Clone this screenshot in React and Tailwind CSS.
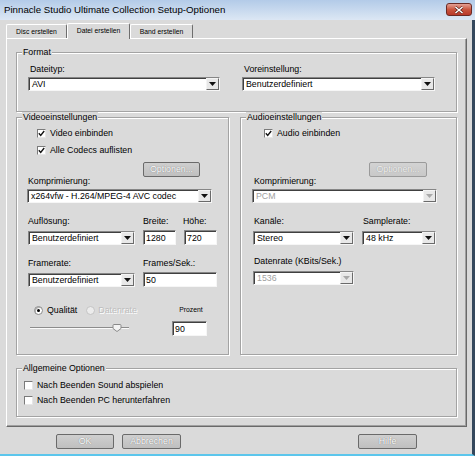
import React from 'react';

function Arrow({ disabled }) {
  return (
    <span className="flex h-full w-[13px] shrink-0 items-center justify-center border-t border-l border-r border-b border-t-[#f4f4f4] border-l-[#f4f4f4] border-r-[#6a6a6a] border-b-[#6a6a6a] bg-[#e8e8e8]">
      <svg width="7" height="4" viewBox="0 0 7 4">
        <path d="M0 0 H7 L3.5 4 Z" fill={disabled ? '#a9a9a9' : '#111'} />
      </svg>
    </span>
  );
}

function Combo({ value, disabled, className = '' }) {
  return (
    <div
      className={`flex h-[14px] bg-white border-t border-l border-r border-b border-t-[#868686] border-l-[#868686] border-r-[#f6f6f6] border-b-[#f6f6f6] shadow-[inset_1px_1px_0_#404040] ${className}`}
    >
      <span className={`flex-1 truncate pl-[3px] pt-[1px] leading-[11px] ${disabled ? 'text-[#a0a0a0]' : ''}`}>{value}</span>
      <Arrow disabled={disabled} />
    </div>
  );
}

function Field({ value, className = '' }) {
  return (
    <div
      className={`h-[15px] bg-white border-t border-l border-r border-b border-t-[#868686] border-l-[#868686] border-r-[#f6f6f6] border-b-[#f6f6f6] shadow-[inset_1px_1px_0_#404040] pl-[2px] pt-[2px] leading-[11px] ${className}`}
    >
      {value}
    </div>
  );
}

function Check({ checked }) {
  return (
    <span className="flex size-[9px] shrink-0 items-center justify-center bg-white border-t border-l border-r border-b border-t-[#7a7a7a] border-l-[#7a7a7a] border-r-[#e6e6e6] border-b-[#e6e6e6]">
      {checked && (
        <svg width="7" height="7" viewBox="0 0 7 7">
          <path d="M0.8 3.3 L2.7 5.4 L6.2 1" fill="none" stroke="#111" strokeWidth="1.4" />
        </svg>
      )}
    </span>
  );
}

function CheckRow({ checked, label, className = '' }) {
  return (
    <div className={`flex h-[12px] items-center gap-[4px] ${className}`}>
      <Check checked={checked} />
      <span className="leading-[12px]">{label}</span>
    </div>
  );
}

function Group({ title, className = '', children }) {
  return (
    <fieldset className={`border border-[#a3a3a3] shadow-[inset_1px_1px_0_#fff,1px_1px_0_#fff] pl-[5px] ${className}`}>
      <legend className="bg-[#dadada] px-[1px] leading-[11px]">{title}</legend>
      {children}
    </fieldset>
  );
}

function Btn({ children, disabled, className = '' }) {
  return (
    <button
      className={`flex h-[15px] items-center justify-center rounded-[2px] border ${
        disabled
          ? 'border-[#9a9a9a] from-[#d3d3d3] to-[#c8c8c8] text-[#f0f0f0] [text-shadow:0_0_1px_#8c8c8c]'
          : 'border-[#6a6a6a] from-[#cfcfcf] to-[#bfbfbf] text-white [text-shadow:0_0_1px_#606060]'
      } bg-linear-to-b leading-[11px] ${className}`}
    >
      {children}
    </button>
  );
}

function Tab({ active, className = '', children }) {
  return (
    <div
      className={`flex items-center justify-center rounded-t-[2px] border-t border-l border-r border-t-white border-l-white border-r-[#6e6e6e] bg-[#dadada] text-[6.8px] leading-[9px] ${
        active ? 'relative z-10 -mb-px h-[16px] pb-[2px]' : 'h-[14px]'
      } ${className}`}
    >
      {children}
    </div>
  );
}

export default function App() {
  return (
    <div className="flex h-[456px] w-[475px] flex-col overflow-hidden bg-[#dadada] font-['Liberation_Sans',Arial,sans-serif] text-[8.8px] leading-[11px] text-black">
      {/* Titelleiste */}
      <div className="flex h-[20px] shrink-0 items-start justify-between bg-linear-to-b from-[#b3cbe8] to-[#dce7f4] pl-[4px] pr-[3px]">
        <span className="mt-[4px] text-[9.7px] leading-[12px]">Pinnacle Studio Ultimate Collection Setup-Optionen</span>
        <div className="mt-[3px] flex h-[13px] w-[26px] items-center justify-center rounded-[3px] border border-[#6b2a24] bg-linear-to-b from-[#e3a196] via-[#c9553f] to-[#b8392b]">
          <svg width="10" height="8" viewBox="0 0 10 8">
            <path d="M1.5 1 L8.5 7 M8.5 1 L1.5 7" stroke="#4a1410" strokeWidth="2.6" />
            <path d="M1.5 1 L8.5 7 M8.5 1 L1.5 7" stroke="#fff" strokeWidth="1.6" />
          </svg>
        </div>
      </div>

      <div className="flex flex-1 flex-col border-r-[3px] border-b-2 border-r-[#34475c] border-b-[#5cc6ec] pt-[3px]">
        {/* Reiter */}
        <div className="ml-[6px] flex h-[15px] items-end">
          <Tab className="w-[61px]">Disc erstellen</Tab>
          <Tab active className="w-[63px]">Datei erstellen</Tab>
          <Tab className="w-[63px]">Band erstellen</Tab>
        </div>

        <div className="ml-[6px] w-[461px] border-t border-l border-r border-b border-t-white border-l-white border-r-[#696969] border-b-[#696969] shadow-[inset_-1px_-1px_0_#a0a0a0] pt-[8px] pl-[9px] pr-[9px] pb-[9px]">
          {/* Format */}
          <Group title="Format" className="w-[441px] pb-[20px]">
            <div className="ml-[6px] mt-[6px] flex gap-[22px]">
              <div className="flex w-[192px] flex-col">
                <span className="pl-[2px] leading-[10px]">Dateityp:</span>
                <Combo className="mt-[3px]" value="AVI" />
              </div>
              <div className="flex w-[193px] flex-col">
                <span className="pl-[2px] leading-[10px]">Voreinstellung:</span>
                <Combo className="mt-[3px]" value="Benutzerdefiniert" />
              </div>
            </div>
          </Group>

          <div className="flex gap-[11px]">
            {/* Video */}
            <Group title="Videoeinstellungen" className="w-[213px] pb-[18px]">
              <CheckRow className="ml-[15px] mt-[4px]" checked label="Video einbinden" />
              <CheckRow className="ml-[15px] mt-[5px]" checked label="Alle Codecs auflisten" />
              <Btn className="ml-[121px] mt-[6px] w-[57px]">Optionen...</Btn>
              <div className="ml-[6px] -mt-[1px] leading-[10px]">Komprimierung:</div>
              <Combo className="ml-[5px] mt-[3px] w-[185px]" value="x264vfw - H.264/MPEG-4 AVC codec" />

              <div className="mt-[13px] flex items-end">
                <div className="ml-[6px] flex w-[107px] flex-col">
                  <span className="leading-[10px]">Auflösung:</span>
                  <Combo className="mt-[5px]" value="Benutzerdefiniert" />
                </div>
                <div className="ml-[8px] flex w-[33px] flex-col">
                  <span className="leading-[10px]">Breite:</span>
                  <Field className="mt-[4px]" value="1280" />
                </div>
                <div className="ml-[8px] flex w-[33px] flex-col">
                  <span className="-ml-[1px] leading-[10px]">Höhe:</span>
                  <Field className="mt-[4px]" value="720" />
                </div>
              </div>

              <div className="mt-[13px] flex items-end">
                <div className="ml-[6px] flex w-[107px] flex-col">
                  <span className="leading-[10px]">Framerate:</span>
                  <Combo className="mt-[5px]" value="Benutzerdefiniert" />
                </div>
                <div className="ml-[8px] flex w-[74px] flex-col">
                  <span className="leading-[10px]">Frames/Sek.:</span>
                  <Field className="mt-[4px]" value="50" />
                </div>
              </div>

              <div className="mt-[17px] flex">
                <div className="flex w-[150px] flex-col">
                  <div className="ml-[12px] flex h-[12px] items-center">
                    <span className="flex size-[9px] items-center justify-center rounded-full border border-[#8a8a8a] bg-white shadow-[inset_1px_1px_0_#b0b0b0]">
                      <span className="size-[3px] rounded-full bg-black" />
                    </span>
                    <span className="ml-[4px] leading-[12px]">Qualität</span>
                    <span className="ml-[9px] size-[9px] rounded-full border border-[#c4c4c4] bg-[#ececec]" />
                    <span className="ml-[3px] leading-[12px] text-[#bdbdbd] [text-shadow:1px_1px_0_#fff]">Datenrate</span>
                  </div>
                  <div className="ml-[8px] mt-[5px] flex h-[14px] items-center">
                    <svg width="99" height="8" viewBox="0 0 99 8">
                      <line x1="0" y1="3.5" x2="99" y2="3.5" stroke="#8c8c8c" strokeWidth="1" />
                      <line x1="0" y1="4.5" x2="99" y2="4.5" stroke="#fafafa" strokeWidth="1" />
                      <path d="M83 1.5 Q83 0.5 84 0.5 H90 Q91 0.5 91 1.5 V4.5 L87 7.5 L83 4.5 Z" fill="#f4f4f4" stroke="#8a8a8a" strokeWidth="1" />
                    </svg>
                  </div>
                </div>
                <div className="flex w-[35px] flex-col items-center">
                  <span className="pl-[3px] text-[6.8px] leading-[12px]">Prozent</span>
                  <Field className="mt-[5px] h-[14px] w-[35px] pt-[1px]" value="90" />
                </div>
              </div>
            </Group>

            {/* Audio */}
            <Group title="Audioeinstellungen" className="w-[217px]">
              <CheckRow className="ml-[18px] mt-[4px]" checked label="Audio einbinden" />
              <div className="mt-[5px] h-[12px]" />
              <Btn disabled className="ml-[123px] mt-[6px] w-[58px]">Optionen...</Btn>
              <div className="ml-[8px] -mt-[1px] leading-[10px]">Komprimierung:</div>
              <Combo disabled className="ml-[6px] mt-[3px] w-[185px]" value="PCM" />

              <div className="mt-[13px] flex items-end">
                <div className="ml-[7px] flex w-[101px] flex-col">
                  <span className="pl-[1px] leading-[10px]">Kanäle:</span>
                  <Combo className="mt-[5px]" value="Stereo" />
                </div>
                <div className="ml-[8px] flex w-[74px] flex-col">
                  <span className="pl-[1px] leading-[10px]">Samplerate:</span>
                  <Combo className="mt-[5px]" value="48 kHz" />
                </div>
              </div>

              <div className="ml-[7px] mt-[11px] flex w-[101px] flex-col">
                <span className="pl-[1px] leading-[10px]">Datenrate (KBits/Sek.)</span>
                <Combo disabled className="mt-[5px]" value="1536" />
              </div>
            </Group>
          </div>

          {/* Allgemein */}
          <Group title="Allgemeine Optionen" className="mt-[8px] w-[441px] pb-[10px]">
            <CheckRow className="ml-[2px] mt-[5px]" label="Nach Beenden Sound abspielen" />
            <CheckRow className="ml-[2px] mt-[3px]" label="Nach Beenden PC herunterfahren" />
          </Group>
        </div>

        {/* Schaltflächen */}
        <div className="mt-[7px] flex">
          <Btn className="ml-[56px] w-[58px]">OK</Btn>
          <Btn className="ml-[8px] w-[59px]">Abbrechen</Btn>
          <Btn className="ml-auto mr-[55px] w-[59px]">Hilfe</Btn>
        </div>
      </div>
    </div>
  );
}
